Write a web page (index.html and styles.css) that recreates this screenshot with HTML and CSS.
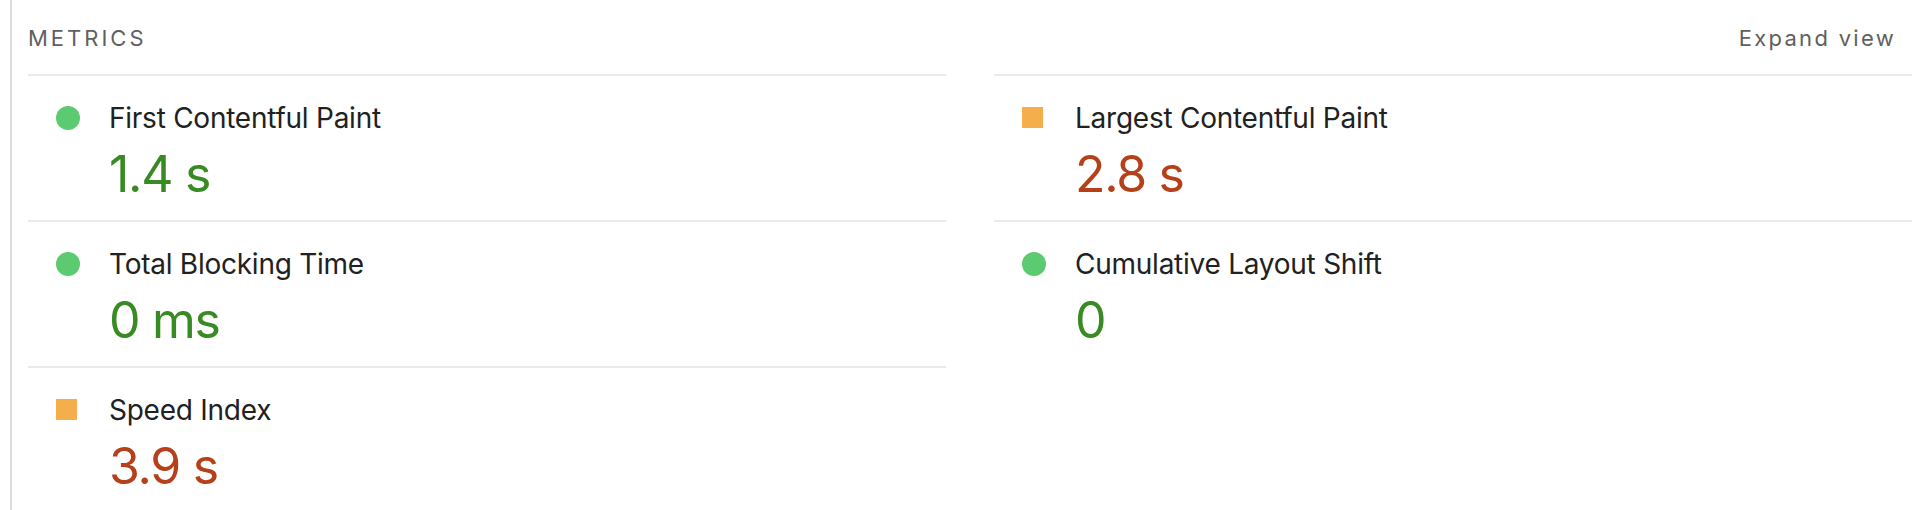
FILE: index.html
```html
<!DOCTYPE html>
<html lang="en">
<head>
    <meta charset="UTF-8">
    <meta name="viewport" content="width=device-width, initial-scale=1.0">
    <title>metrics</title>
    <link rel="stylesheet" href="styles.css">
</head>
<body>
    <div class="panel">
        <div class="panel_head">
            <span class="panel_title">Metrics</span>
            <span class="panel_toggle">Expand view</span>
        </div>
        <div class="metric_grid">
            <div class="metric">
                <span class="icon icon_pass"></span>
                <div class="metric_title">First Contentful Paint</div>
                <div class="metric_value pass">1.4 s</div>
            </div>
            <div class="metric">
                <span class="icon icon_avg"></span>
                <div class="metric_title">Largest Contentful Paint</div>
                <div class="metric_value avg">2.8 s</div>
            </div>
            <div class="metric">
                <span class="icon icon_pass"></span>
                <div class="metric_title">Total Blocking Time</div>
                <div class="metric_value pass">0 ms</div>
            </div>
            <div class="metric">
                <span class="icon icon_pass"></span>
                <div class="metric_title">Cumulative Layout Shift</div>
                <div class="metric_value pass">0</div>
            </div>
            <div class="metric">
                <span class="icon icon_avg"></span>
                <div class="metric_title">Speed Index</div>
                <div class="metric_value avg">3.9 s</div>
            </div>
        </div>
    </div>
</body>
</html>
```

FILE: styles.css
```css
*{margin: 0; padding: 0; box-sizing: border-box;}
body{font-family: Inter, "Noto Sans", sans-serif; background: #fff; color: #212121; height: 510px; overflow: hidden;}
.panel{margin-left: 10px; border-left: 2px solid #dcdce1; padding: 0 12px 0 16px; height: 510px;}
.panel_head{display: flex; justify-content: space-between; align-items: baseline; padding: 26px 0 24px; line-height: 24px;}
.panel_title{font-size: 22px; letter-spacing: 3px; text-transform: uppercase; color: #606060;}
.panel_toggle{font-size: 22px; letter-spacing: 2.3px; color: #606060; margin-right: 16px;}
.metric_grid{display: grid; grid-template-columns: 1fr 1fr; column-gap: 48px;}
.metric{border-top: 2px solid #ebebeb; display: grid; grid-template-columns: 24px 1fr; column-gap: 29px; padding: 25px 0 16px 28px; height: 146px;}
.icon{grid-row: 1; align-self: center; margin-top: -1px;}
.icon_pass{width: 24px; height: 24px; border-radius: 50%; background: #5bca70;}
.icon_avg{width: 21px; height: 21px; background: #f4ae4b;}
.metric_title{grid-column: 2; font-size: 28px; line-height: 34px; letter-spacing: -0.25px;}
.metric_value{grid-column: 2; font-size: 50px; line-height: 60px; margin-top: 9px; letter-spacing: -1.3px;}
.pass{color: #388a22;}
.avg{color: #b5401a;}
```
